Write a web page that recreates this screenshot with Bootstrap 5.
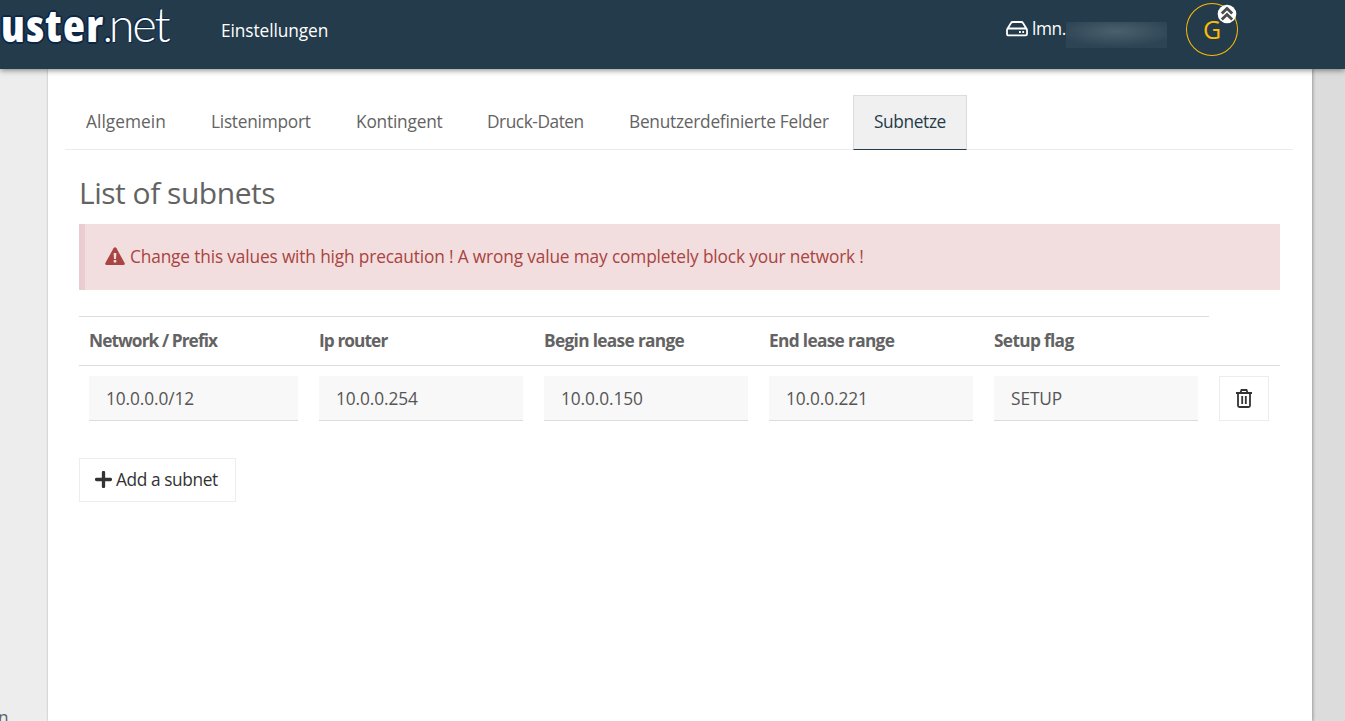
<!DOCTYPE html>
<html lang="de">
<head>
<meta charset="utf-8">
<meta name="viewport" content="width=device-width, initial-scale=1">
<title>Einstellungen</title>
<link href="https://cdn.jsdelivr.net/npm/bootstrap@5.3.0/dist/css/bootstrap.min.css" rel="stylesheet">
<style>
body{font-family:"Open Sans","Noto Sans",sans-serif;font-size:17.3px;letter-spacing:-.15px;line-height:24px;color:#636363;background:#dcdcdc;height:721px;overflow:hidden}
.topbar{height:69px;background:#243b4b;color:#fff;box-shadow:0 1px 6px rgba(0,0,0,.5);z-index:5;padding:0 107px 0 1px}
.logo{font-size:45px;line-height:69px;margin-top:-19px;width:220px;text-shadow:-1px -1px #0b2748,1px -1px #0b2748,-1px 1px #0b2748,1px 1px #0b2748,0 2px #0b2748,2px 0 #0b2748,0 -2px #0b2748,-2px 0 #0b2748}
.logo b{font-weight:800;font-stretch:75%;letter-spacing:1.5px}
.logo i{font-style:normal;font-weight:300;font-family:Lato,sans-serif;letter-spacing:-4.500px;margin-left:-2px}
.logo span{font-weight:300;font-family:Lato,sans-serif;font-size:47px;letter-spacing:-2.200px;text-shadow:-1px -1px #0b2748,1px 1px #0b2748}
.main-link{margin-top:-7px;letter-spacing:-.08px}
.host{letter-spacing:-.4px;width:34px;margin-top:-11px}
.disk{margin:-12px 4px 0 0}
.redacted{width:101px;height:26px;background:radial-gradient(ellipse 60% 60% at 50% 36%,#4b606e,#2d4454 100%)}
.avatar{width:52px;height:53px;border:1px solid #fbbc05;color:#fbbc05;font-size:25px;margin:-10px 0 0 19px;letter-spacing:0;padding-bottom:2px}
.avatar svg{position:absolute;right:0;top:0}
.sidebar{width:48px;background:#ededed;border-right:1px solid #e4e4e4}
.sidebar span{margin-left:-2px;margin-bottom:-9px}
.panel{width:1264px;background:#fff;box-shadow:1px 0 3px rgba(0,0,0,.3);padding:26px 19px 0 17px}
.tabs{border-bottom:1px solid #ececec;gap:3px;height:55px}
.tabs .nav-link{border:1px solid transparent;border-radius:0;padding:14px 0 0 20px;height:55px;color:#636363;white-space:nowrap}
.tabs .nav-link.active{background:#f0f0f0;border-color:#dcdcdc #dcdcdc #243b4b;color:#243b4b}
.t1{width:122px;letter-spacing:.05px}.t2{width:142px;letter-spacing:-.25px}.t3{width:128px;letter-spacing:-.2px}.t4{width:139px;letter-spacing:-.45px}.t5{width:242px;letter-spacing:-.25px}.t6{width:114px;letter-spacing:-.37px}
.content{padding:0 13px 0 14px}
h1{font-size:30px;font-weight:400;letter-spacing:-.48px;line-height:36px;margin:25px 0 13px}
.warn{height:66px;background:#f2dede;border-left:6px solid #ebccd1;color:#a94442;padding-left:20px;gap:5px;margin-bottom:26px}
.warn svg{margin-top:-1px}
.subnets{table-layout:fixed;width:1201px;border-collapse:collapse}
.subnets th{height:49px;padding:0 10px;border-top:1px solid #dcdcdc;border-bottom:1px solid #dcdcdc;font-weight:700;letter-spacing:-.67px}
.subnets th:nth-child(-n+2){letter-spacing:-.92px}
.subnets th:last-child{border-top:0}
.subnets td{padding:10px 11px 0 10px}
.subnets .form-control{height:45px;border:0;border-bottom:1px solid #dcdcdc;border-radius:0;background:#f8f8f8;padding:0 17px;font:inherit;letter-spacing:-.1px;color:#555}
.btn-flat{border:1px solid #ededed;border-radius:0;background:#fff;color:#333;font-size:17.3px;letter-spacing:-.4px}
.btn-del{width:50px;height:45px}
.btn-add{width:157px;height:44px;margin-top:37px;padding:0 0 0 15px;gap:4px}
.btn-add svg{margin-top:-2px}
</style>
</head>
<body class="d-flex flex-column">
<header class="topbar d-flex align-items-center position-relative flex-shrink-0">
  <div class="logo text-nowrap"><b>uster</b><i>.</i><span>net</span></div>
  <a class="main-link text-white text-decoration-none" href="#">Einstellungen</a>
  <div class="ms-auto d-flex align-items-center">
    <svg class="disk" width="22" height="16" viewBox="0 0 22 16" fill="none" stroke="#fff" stroke-width="1.800"><path d="M1 8.500 5 2Q5.500 1 6.800 1h8.400q1.300 0 1.800 1l4 6.500M2.500 7.500h17Q21 7.500 21 9v4q0 1.300-1.500 1.300h-17Q1 14.300 1 13V9q0-1.500 1.500-1.500z"/><path d="M13 11h1.800m1.500 0h1.800" stroke-width="2"/></svg>
    <span class="host">lmn.</span><span class="redacted"></span>
    <div class="avatar rounded-circle position-relative d-flex align-items-center justify-content-center">G
      <svg width="20" height="20" viewBox="0 0 20 20"><circle cx="10" cy="10" r="9.300" fill="#fff"/><path d="m4.800 9.500 5.200-5 5.200 5m-10.400 6 5.200-5 5.200 5" fill="none" stroke="#4c4c4c" stroke-width="2.800"/></svg>
    </div>
  </div>
</header>
<div class="d-flex flex-grow-1">
  <aside class="sidebar d-flex align-items-end flex-shrink-0"><span>n</span></aside>
  <main class="panel">
    <nav class="nav tabs flex-nowrap">
      <a class="nav-link t1" href="#">Allgemein</a><a class="nav-link t2" href="#">Listenimport</a><a class="nav-link t3" href="#">Kontingent</a><a class="nav-link t4" href="#">Druck-Daten</a><a class="nav-link t5" href="#">Benutzerdefinierte Felder</a><a class="nav-link t6 active" href="#">Subnetze</a>
    </nav>
    <div class="content">
      <h1>List of subnets</h1>
      <div class="warn d-flex align-items-center">
        <svg width="20" height="19" viewBox="0 0 20 19"><path d="M8.500 1.300q1.500-2 3 0l8 14.500q1 2.200-1.300 2.200H1.800q-2.300 0-1.300-2.200z" fill="#a94442"/><path d="M8.600 6h2.800l-.4 6H9z" fill="#f2dede"/><rect x="8.700" y="13" width="2.600" height="2.500" fill="#f2dede"/></svg>
        <span>Change this values with high precaution ! A wrong value may completely block your network !</span>
      </div>
      <table class="subnets">
        <colgroup><col width="230"><col width="225"><col width="225"><col width="225"><col width="225"><col width="71"></colgroup>
        <thead><tr><th>Network / Prefix</th><th>Ip router</th><th>Begin lease range</th><th>End lease range</th><th>Setup flag</th><th></th></tr></thead>
        <tbody><tr>
          <td><input class="form-control" value="10.0.0.0/12"></td>
          <td><input class="form-control" value="10.0.0.254"></td>
          <td><input class="form-control" value="10.0.0.150"></td>
          <td><input class="form-control" value="10.0.0.221"></td>
          <td><input class="form-control" value="SETUP"></td>
          <td><button class="btn btn-flat btn-del p-0 d-flex align-items-center justify-content-center" aria-label="Delete"><svg width="16" height="19" viewBox="0 0 16 19" fill="none" stroke="#333" stroke-width="1.800"><path d="M0 4h16M4.500 3.500 5.500 1h5l1 2.500M2 4v12.500q0 1.500 1.500 1.500h9q1.500 0 1.500-1.500V4M6.200 7v8M9.800 7v8"/></svg></button></td>
        </tr></tbody>
      </table>
      <button class="btn btn-flat btn-add d-flex align-items-center"><svg width="17" height="17" viewBox="0 0 17 17"><path d="M8.500 1.500v14M1.500 8.500h14" stroke="#333" stroke-width="3.300" stroke-linecap="round"/></svg><span>Add a subnet</span></button>
    </div>
  </main>
</div>
<script src="https://cdn.jsdelivr.net/npm/bootstrap@5.3.0/dist/js/bootstrap.bundle.min.js"></script>
</body>
</html>
